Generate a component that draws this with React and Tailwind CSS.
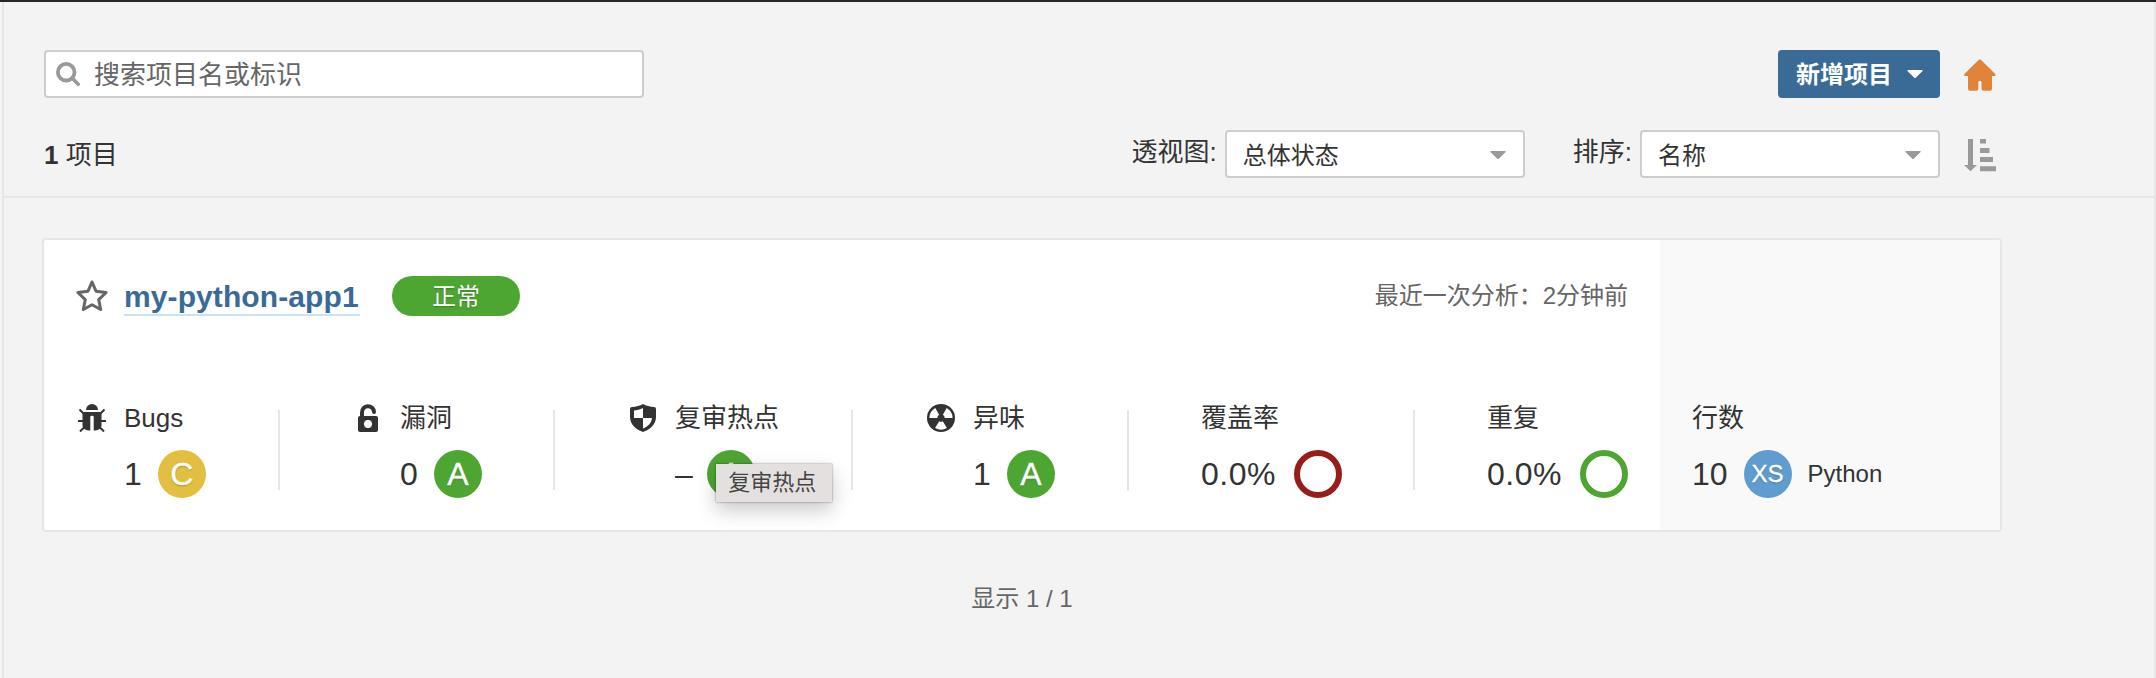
import React from "react";

const LABEL = "text-[26px] leading-[36px] whitespace-nowrap";

function Caret({ className }) {
  return (
    <svg width="16" height="8" viewBox="0 0 16 8" className={className}>
      <path d="M0.8 0h14.4a.6.6 0 0 1 .4 1L8.7 7.7a1 1 0 0 1-1.4 0L.4 1A.6.6 0 0 1 .8 0z" fill="currentColor" />
    </svg>
  );
}

function Select({ children }) {
  return (
    <div className="flex h-12 w-[300px] items-center justify-between rounded border-2 border-[#cdcdcd] bg-white pl-4 pr-[17px]">
      <span className="translate-y-[2px] text-2xl leading-8 whitespace-nowrap">{children}</span>
      <Caret className="translate-y-px text-[#999]" />
    </div>
  );
}

function SearchIcon() {
  return (
    <svg width="24" height="24" viewBox="0 0 24 24" fill="none" stroke="#999" className="shrink-0">
      <circle cx="10.2" cy="10.2" r="8.3" strokeWidth="3.8" />
      <path d="M16.3 16.3L22.2 22.2" strokeWidth="3.6" strokeLinecap="round" />
    </svg>
  );
}

function HomeIcon() {
  return (
    <svg width="32" height="32" viewBox="0 0 32 32" fill="#e0843a" className="translate-y-px">
      <path d="M14.8 .7a1.500 1.500 0 0 1 2 0L31 14.800a1.300 1.300 0 0 1-.6 2.300H28V29.800a2 2 0 0 1-2 2H19.500a2 2 0 0 1-2-2V23.300a1.600 1.600 0 0 0-3.200 0V29.800a2 2 0 0 1-2 2H6a2 2 0 0 1-2-2V17.100H1.300a1.300 1.300 0 0 1-.6-2.300z" />
    </svg>
  );
}

function SortIcon() {
  return (
    <svg width="32" height="34" viewBox="0 0 32 34" fill="#999" className="translate-y-px">
      <path d="M4 1h5v26h4L6.500 33.200 0 27h4zM16 1h6v4.500h-6zM16 10h9.500v5h-9.500zM16 19h13v5H16zM16 28.200h16v5H16z" />
    </svg>
  );
}

function StarIcon() {
  return (
    <svg width="32" height="32" viewBox="0 0 32 32" fill="none" stroke="#666" strokeWidth="3" strokeLinejoin="round">
      <path d="M16 2L20 11.200L30.100 12.500L22.700 19.600L24.700 29.500L16 24.800L7.300 29.500L9.300 19.600L1.900 12.500L12 11.200Z" />
    </svg>
  );
}

function BugIcon() {
  return (
    <svg width="28" height="28" viewBox="0 0 28 28" fill="#333" className="overflow-visible">
      <path d="M8 6a6 6 0 0 1 12 0z" />
      <path d="M4.500 8h19v13.500c0 3-3.300 5-7.800 5V13a1.200 1.200 0 0 0-1.200-1.200h-1A1.200 1.200 0 0 0 12.300 13v13.500c-4.500 0-7.800-2-7.800-5z" />
      <path d="M1.500 5.500l4.500 4.500M26.500 5.500l-4.500 4.500M0 17h6M28 17h-6M2 27.500l5-5M26 27.500l-5-5" stroke="#333" strokeWidth="2" />
    </svg>
  );
}

function LockIcon() {
  return (
    <svg width="20" height="28" viewBox="0 0 20 28">
      <path d="M4 14V8.500a6 6 0 0 1 12-.5" fill="none" stroke="#333" strokeWidth="4" strokeLinecap="round" />
      <path fillRule="evenodd" fill="#333" d="M2 12h16a2 2 0 0 1 2 2v12a2 2 0 0 1-2 2H2a2 2 0 0 1-2-2V14a2 2 0 0 1 2-2zM10 16a4 4 0 1 0 0 8a4 4 0 0 0 0-8z" />
    </svg>
  );
}

function ShieldIcon() {
  return (
    <svg width="26" height="28" viewBox="0 0 26 28">
      <path d="M13 0C16 1.800 20 2.800 24 3a2 2 0 0 1 2 2v8c0 8-7 13-13 15C7 26 0 21 0 13V5a2 2 0 0 1 2-2C6 2.800 10 1.800 13 0z" fill="#333" />
      <path d="M13 4v10H4V6.500C7 6.200 10 5.500 13 4zM13 14h9c-.5 5-4 8.500-9 10.500z" fill="#fff" />
    </svg>
  );
}

const BLADE = "M12.200 17.200a3.700 3.700 0 0 0 3.600 0L19.900 24a11.600 11.600 0 0 1-11.800 0z";

function RadiationIcon() {
  return (
    <svg width="28" height="28" viewBox="0 0 28 28">
      <circle cx="14" cy="14" r="14" fill="#333" />
      <path d={BLADE} fill="#fff" />
      <path d={BLADE} fill="#fff" transform="rotate(120 14 14)" />
      <path d={BLADE} fill="#fff" transform="rotate(240 14 14)" />
    </svg>
  );
}

const TONES = {
  green: "bg-[#4ea632]",
  yellow: "bg-[#e2bf41]",
  blue: "bg-[#5f9dd0]",
};

function Rating({ tone, small, children }) {
  return (
    <span
      className={`${TONES[tone]} ${small ? "text-2xl" : "text-[32px]"} flex size-12 items-center justify-center rounded-full text-white [-webkit-text-stroke:0.4px_white] [text-shadow:0_1px_2px_rgba(0,0,0,0.25)]`}
    >
      {children}
    </span>
  );
}

function Ring({ className }) {
  return <span className={`${className} size-12 rounded-full border-[6px]`} />;
}

function Metric({ icon, label, value, className, gap, iconWidth = "w-[46px]", children }) {
  return (
    <div className={`${className} flex shrink-0`}>
      {icon && <div className={`${iconWidth} flex h-9 shrink-0 items-center`}>{icon}</div>}
      <div>
        <div className={LABEL}>{label}</div>
        <div className={`${gap} mt-[14px] flex h-12 items-center`}>
          <span className="text-[32px] leading-none whitespace-nowrap">{value}</span>
          {children}
        </div>
      </div>
    </div>
  );
}

function Divider() {
  return <div className="mt-[10px] h-20 w-[2px] shrink-0 bg-[#e6e6e6]" />;
}

export default function App() {
  return (
    <div className="flex h-[678px] w-[2156px] flex-col border-t-2 border-[#262425] bg-[#f3f3f3] pl-[2px] font-['Liberation_Sans','Noto_Sans_CJK_SC',sans-serif] text-[#333]">
      <div className="flex flex-1 flex-col border-x-2 border-[#e6e6e6]">
        <header className="flex h-[196px] flex-col gap-8 border-b-2 border-[#e6e6e6] pt-12 pr-[158px] pl-10">
          <div className="flex h-12 items-center justify-between">
            <div className="flex h-12 w-[600px] items-center gap-[14px] rounded border-2 border-[#cdcdcd] bg-white pl-[10px]">
              <SearchIcon />
              <span className="translate-y-px text-[26px] leading-9 whitespace-nowrap text-[#666]">搜索项目名或标识</span>
            </div>
            <div className="flex items-center gap-[24px]">
              <button className="flex h-12 w-[162px] items-center justify-between rounded bg-[#3a6b96] pr-[17px] pl-[18px] text-2xl font-bold text-white">
                <span className="translate-y-px whitespace-nowrap">新增项目</span>
                <Caret />
              </button>
              <HomeIcon />
            </div>
          </div>
          <div className="flex h-12 items-center">
            <span className={`${LABEL} translate-y-px`}>
              <b>1</b> 项目
            </span>
            <span className={`${LABEL} mr-2 ml-auto -translate-y-[2px]`}>透视图:</span>
            <Select>总体状态</Select>
            <span className={`${LABEL} mr-2 ml-12 -translate-y-[2px]`}>排序:</span>
            <Select>名称</Select>
            <div className="ml-[24px]">
              <SortIcon />
            </div>
          </div>
        </header>

        <main className="pt-10 pl-[38px]">
          <section className="flex h-[294px] w-[1960px] overflow-hidden rounded border-2 border-[#e6e6e6] bg-white">
            <div className="w-[1616px] pt-9">
              <div className="flex h-10 items-center pr-8 pl-8">
                <StarIcon />
                <a className="ml-4 flex h-[38px] w-[236px] translate-y-px items-end border-b-2 border-[#cae3f2] text-[30px] leading-[35px] font-bold tracking-[0.1px] whitespace-nowrap text-[#3a6b96]">
                  my-python-app1
                </a>
                <span className="ml-8 flex h-10 w-32 items-center justify-center rounded-full bg-[#4ea632] text-2xl text-white [text-shadow:0_1px_2px_rgba(0,0,0,0.25)]">
                  <span className="translate-y-px">正常</span>
                </span>
                <span className="ml-auto text-2xl whitespace-nowrap text-[#666]">最近一次分析：2分钟前</span>
              </div>
              <div className="mt-[84px] flex pl-[34px]">
                <Metric className="w-[200px]" icon={<BugIcon />} label="Bugs" value="1" gap="gap-4">
                  <Rating tone="yellow">C</Rating>
                </Metric>
                <Divider />
                <Metric className="ml-[78px] w-[195px]" iconWidth="w-[42px]" icon={<LockIcon />} label="漏洞" value="0" gap="gap-4">
                  <Rating tone="green">A</Rating>
                </Metric>
                <Divider />
                <Metric className="ml-[75px] w-[221px]" iconWidth="w-[45px]" icon={<ShieldIcon />} label="复审热点" value="–" gap="gap-[14px]">
                  <div className="relative">
                    <Rating tone="green">A</Rating>
                    <div className="absolute top-[14px] left-[9px] flex h-[38px] w-[116px] items-center justify-center bg-[#e4e0e0] pr-[3px] pb-[2px] text-[22px] whitespace-nowrap text-[#444] shadow-[0_0_2px_rgba(0,0,0,0.45),0_8px_20px_rgba(0,0,0,0.22)]">
                      复审热点
                    </div>
                  </div>
                </Metric>
                <Divider />
                <Metric className="ml-[74px] w-[200px]" icon={<RadiationIcon />} label="异味" value="1" gap="gap-4">
                  <Rating tone="green">A</Rating>
                </Metric>
                <Divider />
                <Metric className="ml-[72px] w-[212px]" label="覆盖率" value={<span className="tracking-[0.5px]">0.0%</span>} gap="gap-[18px]">
                  <Ring className="border-[#971d1b]" />
                </Metric>
                <Divider />
                <Metric className="ml-[72px]" label="重复" value={<span className="tracking-[0.5px]">0.0%</span>} gap="gap-[18px]">
                  <Ring className="border-[#4ea632]" />
                </Metric>
              </div>
            </div>
            <div className="flex-1 bg-[#f9f9f9] pt-40 pl-8">
              <Metric label="行数" value="10" gap="gap-4">
                <Rating tone="blue" small>XS</Rating>
                <span className="text-2xl">Python</span>
              </Metric>
            </div>
          </section>
          <footer className="mt-12 w-[1960px] text-center text-2xl leading-[38px] text-[#666]">显示 1 / 1</footer>
        </main>
      </div>
    </div>
  );
}
